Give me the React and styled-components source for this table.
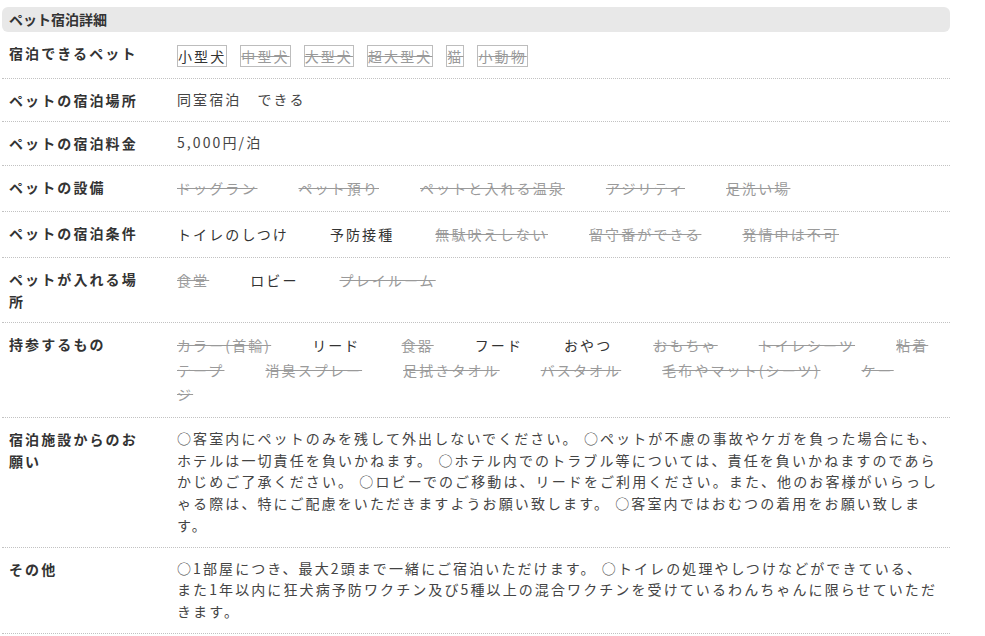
import React from "react";
import styled, { createGlobalStyle } from "styled-components";

const GlobalStyle = createGlobalStyle`
  html, body {
    margin: 0;
    padding: 0;
    background: #ffffff;
  }
  body {
    font-family: "Noto Sans CJK JP", "Noto Sans", sans-serif;
    color: #333333;
    font-size: 14px;
  }
`;

const Section = styled.section`
  width: 948px;
  padding: 7px 0 0 2px;
`;

const Heading = styled.h2`
  margin: 0;
  height: 25px;
  line-height: 25px;
  padding: 0 7px;
  background: #e8e8e8;
  border-radius: 6px;
  font-size: 14px;
  font-weight: bold;
  color: #333333;
`;

const List = styled.dl`
  margin: 0;
`;

const Row = styled.div`
  display: grid;
  grid-template-columns: 175px 1fr;
  border-bottom: 1px dotted #c2c2c2;
`;

const Label = styled.dt`
  padding: 10px 30px 10.5px 7px;
  font-weight: bold;
  letter-spacing: 0.15em;
  line-height: 22px;
  color: #333333;
`;

const Value = styled.dd`
  margin: 0;
  padding: 10px 8px 10.5px 0;
  letter-spacing: 0.15em;
  line-height: ${(p) => (p.$items ? "24.5px" : "21.6px")};
  color: #444444;
`;

const Tag = styled.span`
  display: inline-block;
  vertical-align: middle;
  margin-right: 13px;
  border: 1px solid #bdbdbd;
  line-height: 20px;
  color: ${(p) => (p.$on ? "#333333" : "#999999")};
  text-decoration: ${(p) => (p.$on ? "none" : "line-through")};
`;

const Item = styled.span`
  margin-right: 41px;
  color: ${(p) => (p.$on ? "#333333" : "#9a9a9a")};
  text-decoration: ${(p) => (p.$on ? "none" : "line-through")};
`;

const pets = [
  ["小型犬", true],
  ["中型犬", false],
  ["大型犬", false],
  ["超大型犬", false],
  ["猫", false],
  ["小動物", false],
];

const facilities = [
  ["ドッグラン", false],
  ["ペット預り", false],
  ["ペットと入れる温泉", false],
  ["アジリティ", false],
  ["足洗い場", false],
];

const conditions = [
  ["トイレのしつけ", true],
  ["予防接種", true],
  ["無駄吠えしない", false],
  ["留守番ができる", false],
  ["発情中は不可", false],
];

const places = [
  ["食堂", false],
  ["ロビー", true],
  ["プレイルーム", false],
];

const belongings = [
  ["カラー(首輪)", false],
  ["リード", true],
  ["食器", false],
  ["フード", true],
  ["おやつ", true],
  ["おもちゃ", false],
  ["トイレシーツ", false],
  ["粘着テープ", false],
  ["消臭スプレー", false],
  ["足拭きタオル", false],
  ["バスタオル", false],
  ["毛布やマット(シーツ)", false],
  ["ケージ", false],
];

const ItemList = ({ items }) =>
  items.map(([name, on]) => (
    <Item key={name} $on={on}>
      {name}
    </Item>
  ));

export default function App() {
  return (
    <>
      <GlobalStyle />
      <Section>
        <Heading>ペット宿泊詳細</Heading>
        <List>
          <Row>
            <Label>宿泊できるペット</Label>
            <Value $items>
              {pets.map(([name, on]) => (
                <Tag key={name} $on={on}>
                  {name}
                </Tag>
              ))}
            </Value>
          </Row>
          <Row>
            <Label>ペットの宿泊場所</Label>
            <Value>同室宿泊　できる</Value>
          </Row>
          <Row>
            <Label>ペットの宿泊料金</Label>
            <Value>5,000円/泊</Value>
          </Row>
          <Row>
            <Label>ペットの設備</Label>
            <Value $items>
              <ItemList items={facilities} />
            </Value>
          </Row>
          <Row>
            <Label>ペットの宿泊条件</Label>
            <Value $items>
              <ItemList items={conditions} />
            </Value>
          </Row>
          <Row>
            <Label>ペットが入れる場所</Label>
            <Value $items>
              <ItemList items={places} />
            </Value>
          </Row>
          <Row>
            <Label>持参するもの</Label>
            <Value $items>
              <ItemList items={belongings} />
            </Value>
          </Row>
          <Row>
            <Label>宿泊施設からのお願い</Label>
            <Value>
              ○客室内にペットのみを残して外出しないでください。 ○ペットが不慮の事故やケガを負った場合にも、ホテルは一切責任を負いかねます。 ○ホテル内でのトラブル等については、責任を負いかねますのであらかじめご了承ください。 ○ロビーでのご移動は、リードをご利用ください。また、他のお客様がいらっしゃる際は、特にご配慮をいただきますようお願い致します。 ○客室内ではおむつの着用をお願い致します。
            </Value>
          </Row>
          <Row>
            <Label>その他</Label>
            <Value>
              ○1部屋につき、最大2頭まで一緒にご宿泊いただけます。 ○トイレの処理やしつけなどができている、
              <br />
              また1年以内に狂犬病予防ワクチン及び5種以上の混合ワクチンを受けているわんちゃんに限らせていただきます。
            </Value>
          </Row>
        </List>
      </Section>
    </>
  );
}
